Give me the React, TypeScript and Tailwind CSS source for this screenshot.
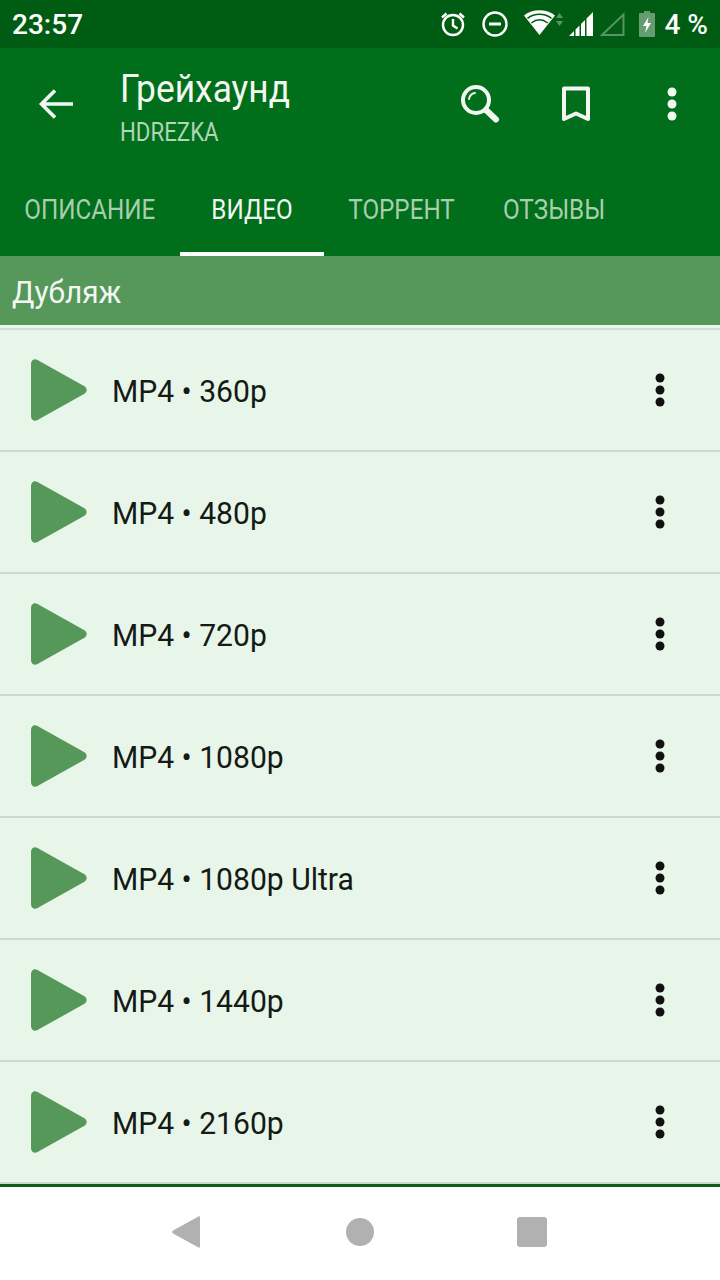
const font = { fontFamily: "Roboto, sans-serif" };

// ===== Types =====
const QUALITIES = ["360p", "480p", "720p", "1080p", "1080p Ultra", "1440p", "2160p"];
const TABS = ["ОПИСАНИЕ", "ВИДЕО", "ТОРРЕНТ", "ОТЗЫВЫ"];

// ===== SVG Icons =====
const IconAlarm = () => (
  <svg width="28" height="28" viewBox="0 0 28 28" fill="none" stroke="#fff" strokeWidth="2.4">
    <circle cx="14" cy="15" r="10" />
    <path d="M14 9v6.500l4.500 3M3 7.500 7.500 3.500M25 7.500 20.500 3.500" />
  </svg>
);

const IconDnd = () => (
  <svg width="28" height="28" viewBox="0 0 28 28" fill="none" stroke="#fff" strokeWidth="2.4">
    <circle cx="14" cy="14" r="11.500" />
    <path d="M8 14h12" strokeWidth="3" />
  </svg>
);

const IconWifi = () => (
  <svg width="40" height="28" viewBox="0 0 40 28">
    <path d="M0 5.500C8-1.500 23-1.500 31 5.500L15.500 25Z" fill="#fff" />
    <path d="M3.500 8.300C10.500 3 20.500 3 27.500 8.300M7.300 13C12.500 9 18.500 9 23.700 13" fill="none" stroke="#005c12" strokeWidth="1.500" />
    <path d="M32 8l3.500-5 3.500 5ZM32 11h7l-3.500 5Z" fill="#fff" fillOpacity="0.35" />
  </svg>
);

const IconSignal = () => (
  <svg width="24" height="24" viewBox="0 0 24 24" fill="#fff">
    <path d="M0 24 5 19V24ZM6.500 17.500 10.500 13.500V24H6.500ZM12 12 16 8V24H12ZM17.500 6.500 24 0V24H17.500Z" />
  </svg>
);

const IconNoSim = () => (
  <svg width="26" height="24" viewBox="0 0 26 24" fill="none" stroke="#fff" strokeOpacity="0.35" strokeWidth="2">
    <path d="M3 23 24.500 2.500V23Z" />
  </svg>
);

const IconBattery = () => (
  <svg width="16" height="26" viewBox="0 0 16 26">
    <path d="M5 0h6v2h4a1 1 0 0 1 1 1v22a1 1 0 0 1-1 1H1a1 1 0 0 1-1-1V3a1 1 0 0 1 1-1h4Z" fill="#fff" fillOpacity="0.4" />
    <path d="M9.500 6 4 15h3.500L6 22l6-10H8.500Z" fill="#fff" />
  </svg>
);

const IconBack = () => (
  <svg width="36" height="36" viewBox="0 0 36 36" fill="none" stroke="#f2f7f2" strokeWidth="3.600">
    <path d="M35 18H4M17 4.500 3.500 18 17 31.500" />
  </svg>
);

const IconSearch = () => (
  <svg width="40" height="40" viewBox="0 0 40 40" fill="none" stroke="#f2f7f2">
    <circle cx="16" cy="16" r="13" strokeWidth="4" />
    <path d="M26 26 36 35.500" strokeWidth="6" strokeLinecap="round" />
    <path d="M9 15C9.500 11.500 12 9.500 15 9" strokeWidth="2" strokeLinecap="round" />
  </svg>
);

const IconBookmark = () => (
  <svg width="30" height="38" viewBox="0 0 30 38" fill="none" stroke="#f2f7f2" strokeWidth="4">
    <path d="M3 2.500H27V33L15 27.500 3 33Z" strokeLinejoin="round" />
  </svg>
);

const IconDots = ({ color }: { color: string }) => (
  <svg width="10" height="34" viewBox="0 0 10 34" fill={color}>
    <circle cx="5" cy="5" r="4.500" />
    <circle cx="5" cy="17" r="4.500" />
    <circle cx="5" cy="29" r="4.500" />
  </svg>
);

const IconPlay = () => (
  <svg width="56" height="62" viewBox="0 0 56 62" fill="#55985a">
    <path d="M0 5C0 .8 3.500-.8 6.500 1L53 27C56.500 29 56.500 33 53 35L6.500 61C3.500 62.800 0 61.200 0 57Z" />
  </svg>
);

// ===== Components =====
function Row({ quality }: { quality: string }) {
  return (
    <div className="flex h-[122px] items-center border-b-2 border-[#cbd8cc] pl-[31px] pr-[55px]">
      <IconPlay />
      <div className="ml-[25px] mt-[1px] flex-1">
        <span className="inline-block origin-left scale-x-[0.94] text-[32px] text-[#141a15]">MP4 • {quality}</span>
      </div>
      <div className="-mt-[1px]">
        <IconDots color="#111" />
      </div>
    </div>
  );
}

export default function App() {
  return (
    <div className="flex h-[1280px] w-[720px] flex-col overflow-hidden bg-white" style={font}>
      {/* Status bar */}
      <div className="flex h-12 items-center justify-between bg-[#005c12] pl-3 pr-3 text-white">
        <span className="pt-[1px] text-[28px] font-medium">23:57</span>
        <div className="flex items-center">
          <IconAlarm />
          <div className="ml-[14px]"><IconDnd /></div>
          <div className="ml-[15px]"><IconWifi /></div>
          <div className="ml-[5px]"><IconSignal /></div>
          <div className="ml-[6px]"><IconNoSim /></div>
          <div className="ml-[14px]"><IconBattery /></div>
          <span className="ml-[10px] pt-[1px] text-[28px] font-medium">4 %</span>
        </div>
      </div>

      {/* Toolbar */}
      <div className="flex h-[112px] bg-[#006e1a]">
        <div className="ml-[38px] mt-[38px]"><IconBack /></div>
        <div className="ml-[46px] mt-[18px] flex flex-1 flex-col">
          <span className="origin-left scale-x-[0.93] text-[38px] leading-[46px] text-[#f2f7f2]">Грейхаунд</span>
          <span className="mt-[6px] origin-left scale-x-[0.89] text-[25px] leading-[30px] text-[#b2d4b8]">HDREZKA</span>
        </div>
        <div className="mt-[36px] flex items-start">
          <IconSearch />
          <div className="ml-[61px] mt-[2px]"><IconBookmark /></div>
          <div className="ml-[76px] mr-[43px] mt-[3px]"><IconDots color="#f2f7f2" /></div>
        </div>
      </div>

      {/* Tabs */}
      <div className="flex h-[96px] bg-[#006e1a]">
        {TABS.map((tab, i) => (
          <div
            key={tab}
            className={
              i === 0
                ? "flex w-[180px] justify-center pt-[29px] text-[28px] text-[#aacdb0]"
                : i === 1
                  ? "flex w-[144px] justify-center border-b-4 border-white pt-[29px] text-[28px] text-[#f2f7f2]"
                  : i === 2
                    ? "flex w-[155px] justify-center pt-[29px] text-[28px] text-[#aacdb0]"
                    : "flex w-[150px] justify-center pt-[29px] text-[28px] text-[#aacdb0]"
            }
          >
            <span className="inline-block scale-x-[0.865]">{tab}</span>
          </div>
        ))}
      </div>

      {/* Section header */}
      <div className="flex h-[69px] items-center bg-[#55985a] pl-3 pt-[3px]">
        <span className="inline-block origin-left scale-x-[0.93] text-[32px] text-[#f2f7f2]">Дубляж</span>
      </div>
      <div className="h-[3px] bg-[#e8f5e9]" />
      <div className="h-[2px] bg-[#d5dcd5]" />

      {/* Rows */}
      <div className="bg-[#e8f5e9]">
        {QUALITIES.map((q) => (
          <Row key={q} quality={q} />
        ))}
      </div>
      <div className="h-[3px] bg-[#0b5f1a]" />

      {/* Navigation bar */}
      <div className="flex flex-1 items-center bg-white pb-[4px] pl-[172px]">
        <svg width="28" height="32" viewBox="0 0 28 32" fill="#b1b1b1">
          <path d="M28 1.500V30.500C28 31.800 27 32 26 31.300L1 17.500C0 16.800 0 15.200 1 14.500L26 .7C27 0 28 .2 28 1.500Z" />
        </svg>
        <div className="ml-[146px] h-[28px] w-[28px] rounded-full bg-[#b1b1b1]" />
        <div className="ml-[143px] h-[30px] w-[30px] rounded-[3px] bg-[#b1b1b1]" />
      </div>
    </div>
  );
}
